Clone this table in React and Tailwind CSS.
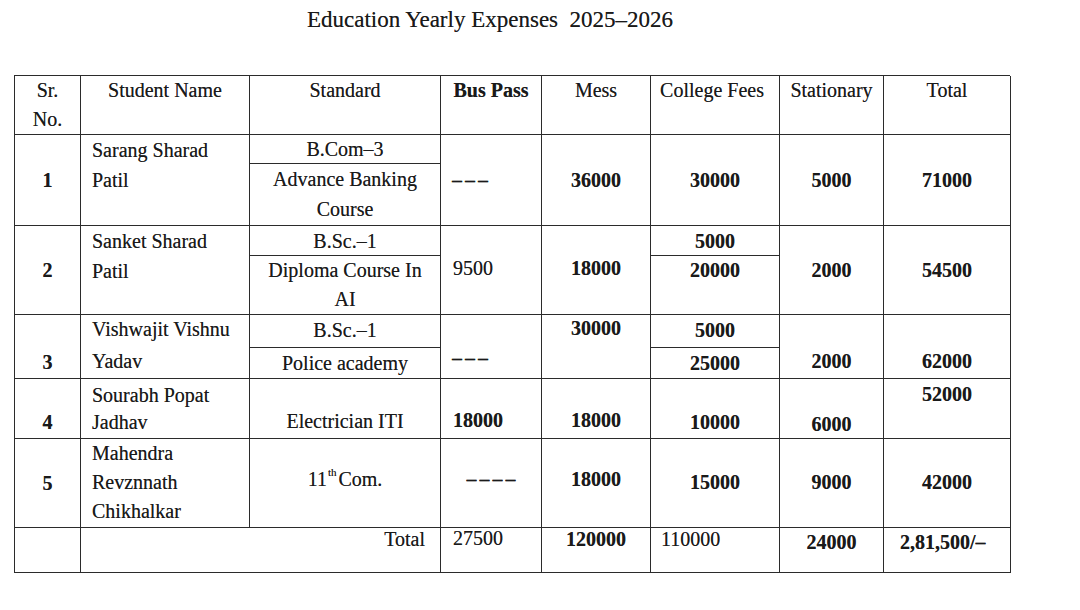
import React from "react";

const B = "border-r-[1.5px] border-b-[1.5px] border-[#2b2b2b]";

export default function App() {
  return (
    <div className="w-[1080px] h-[610px] bg-white text-[#1a1a1a] font-['Liberation_Serif',serif] overflow-hidden [text-shadow:0_0_0.6px_rgba(0,0,0,0.55)]">
      <div className="pl-[307px] pt-[6px] text-[23px] leading-[28px] whitespace-pre">
        Education Yearly Expenses  2025–2026
      </div>
      <div className="ml-[14px] mt-[41px] w-[996px] grid grid-cols-[66px_169px_191px_101px_109px_129px_104px_127px] grid-rows-[59px_29px_62px_30px_59px_33px_31px_60px_89px_45px] border-l-[1.5px] border-t-[1.5px] border-[#2b2b2b] text-[20px] leading-[30px]">
        {/* Header */}
        <div className={`${B} col-start-1 row-start-1 text-center leading-[29px]`}>Sr.<br />No.</div>
        <div className={`${B} col-start-2 row-start-1 text-center leading-[29px]`}>Student Name</div>
        <div className={`${B} col-start-3 row-start-1 text-center leading-[29px]`}>Standard</div>
        <div className={`${B} col-start-4 row-start-1 text-center leading-[29px] font-bold`}>Bus Pass</div>
        <div className={`${B} col-start-5 row-start-1 text-center leading-[29px]`}>Mess</div>
        <div className={`${B} col-start-6 row-start-1 text-center leading-[29px] pr-[6px]`}>College Fees</div>
        <div className={`${B} col-start-7 row-start-1 text-center leading-[29px]`}>Stationary</div>
        <div className={`${B} col-start-8 row-start-1 text-center leading-[29px]`}>Total</div>

        {/* Row 1 */}
        <div className={`${B} col-start-1 row-start-2 row-span-2 flex items-center justify-center font-bold`}>1</div>
        <div className={`${B} col-start-2 row-start-2 row-span-2 pl-[11px]`}>Sarang Sharad<br />Patil</div>
        <div className={`${B} col-start-3 row-start-2 flex items-center justify-center`}>B.Com–3</div>
        <div className={`${B} col-start-3 row-start-3 text-center`}>Advance Banking<br />Course</div>
        <div className={`${B} col-start-4 row-start-2 row-span-2 flex items-center pl-[11px] font-bold tracking-[3px]`}>–––</div>
        <div className={`${B} col-start-5 row-start-2 row-span-2 flex items-center justify-center font-bold`}>36000</div>
        <div className={`${B} col-start-6 row-start-2 row-span-2 flex items-center justify-center font-bold`}>30000</div>
        <div className={`${B} col-start-7 row-start-2 row-span-2 flex items-center justify-center font-bold`}>5000</div>
        <div className={`${B} col-start-8 row-start-2 row-span-2 flex items-center justify-center font-bold`}>71000</div>

        {/* Row 2 */}
        <div className={`${B} col-start-1 row-start-4 row-span-2 flex items-center justify-center font-bold`}>2</div>
        <div className={`${B} col-start-2 row-start-4 row-span-2 pl-[11px]`}>Sanket Sharad<br />Patil</div>
        <div className={`${B} col-start-3 row-start-4 flex items-center justify-center`}>B.Sc.–1</div>
        <div className={`${B} col-start-3 row-start-5 text-center leading-[29px]`}>Diploma Course In<br />AI</div>
        <div className={`${B} col-start-4 row-start-4 row-span-2 flex items-center pl-[12px] pb-[4px]`}>9500</div>
        <div className={`${B} col-start-5 row-start-4 row-span-2 flex items-center justify-center font-bold pb-[4px]`}>18000</div>
        <div className={`${B} col-start-6 row-start-4 flex items-center justify-center font-bold`}>5000</div>
        <div className={`${B} col-start-6 row-start-5 text-center font-bold leading-[28px]`}>20000</div>
        <div className={`${B} col-start-7 row-start-4 row-span-2 flex items-center justify-center font-bold`}>2000</div>
        <div className={`${B} col-start-8 row-start-4 row-span-2 flex items-center justify-center font-bold`}>54500</div>

        {/* Row 3 */}
        <div className={`${B} col-start-1 row-start-6 row-span-2 text-center pt-[32px] font-bold`}>3</div>
        <div className={`${B} col-start-2 row-start-6 row-span-2 pl-[11px] leading-[32px] -mt-[2px]`}>Vishwajit Vishnu<br />Yadav</div>
        <div className={`${B} col-start-3 row-start-6 flex items-center justify-center pb-[3px]`}>B.Sc.–1</div>
        <div className={`${B} col-start-3 row-start-7 flex items-center justify-center`}>Police academy</div>
        <div className={`${B} col-start-4 row-start-6 row-span-2 pl-[11px] pt-[28px] font-bold tracking-[3px]`}>–––</div>
        <div className={`${B} col-start-5 row-start-6 row-span-2 text-center font-bold leading-[26px]`}>30000</div>
        <div className={`${B} col-start-6 row-start-6 flex items-center justify-center font-bold pb-[3px]`}>5000</div>
        <div className={`${B} col-start-6 row-start-7 flex items-center justify-center font-bold`}>25000</div>
        <div className={`${B} col-start-7 row-start-6 row-span-2 text-center pt-[31px] font-bold`}>2000</div>
        <div className={`${B} col-start-8 row-start-6 row-span-2 text-center pt-[31px] font-bold`}>62000</div>

        {/* Row 4 */}
        <div className={`${B} col-start-1 row-start-8 text-center pt-[28px] font-bold`}>4</div>
        <div className={`${B} col-start-2 row-start-8 pl-[11px] pt-[3px] leading-[27px]`}>Sourabh Popat<br />Jadhav</div>
        <div className={`${B} col-start-3 row-start-8 text-center pt-[27px]`}>Electrician ITI</div>
        <div className={`${B} col-start-4 row-start-8 pl-[12px] pt-[26px] font-bold`}>18000</div>
        <div className={`${B} col-start-5 row-start-8 text-center pt-[26px] font-bold`}>18000</div>
        <div className={`${B} col-start-6 row-start-8 text-center pt-[28px] font-bold`}>10000</div>
        <div className={`${B} col-start-7 row-start-8 text-center pt-[30px] font-bold`}>6000</div>
        <div className={`${B} col-start-8 row-start-8 text-center font-bold`}>52000</div>

        {/* Row 5 */}
        <div className={`${B} col-start-1 row-start-9 flex items-center justify-center font-bold`}>5</div>
        <div className={`${B} col-start-2 row-start-9 pl-[11px] leading-[29px]`}>Mahendra<br />Revznnath<br />Chikhalkar</div>
        <div className={`${B} col-start-3 row-start-9 flex items-center justify-center pb-[9px]`}>
          <span>11<sup className="text-[11px] relative -top-[10px] ml-[1px] mr-[2px]">th</sup>Com.</span>
        </div>
        <div className={`${B} col-start-4 row-start-9 flex items-center justify-center pl-[3px] pb-[9px] font-bold tracking-[3px]`}>––––</div>
        <div className={`${B} col-start-5 row-start-9 flex items-center justify-center pb-[9px] font-bold`}>18000</div>
        <div className={`${B} col-start-6 row-start-9 flex items-center justify-center pb-[3px] font-bold`}>15000</div>
        <div className={`${B} col-start-7 row-start-9 flex items-center justify-center pb-[3px] font-bold`}>9000</div>
        <div className={`${B} col-start-8 row-start-9 flex items-center justify-center pb-[3px] font-bold`}>42000</div>

        {/* Total row */}
        <div className={`${B} col-start-1 row-start-10`}></div>
        <div className={`${B} col-start-2 col-span-2 row-start-10 text-right pr-[15px] leading-[22px]`}>Total</div>
        <div className={`${B} col-start-4 row-start-10 pl-[12px] leading-[20px]`}>27500</div>
        <div className={`${B} col-start-5 row-start-10 text-center leading-[22px] font-bold`}>120000</div>
        <div className={`${B} col-start-6 row-start-10 pl-[10px] leading-[22px]`}>110000</div>
        <div className={`${B} col-start-7 row-start-10 text-center pt-[2px] leading-[24px] font-bold`}>24000</div>
        <div className={`${B} col-start-8 row-start-10 pl-[16px] pt-[2px] leading-[24px] font-bold`}>2,81,500/–</div>
      </div>
    </div>
  );
}
